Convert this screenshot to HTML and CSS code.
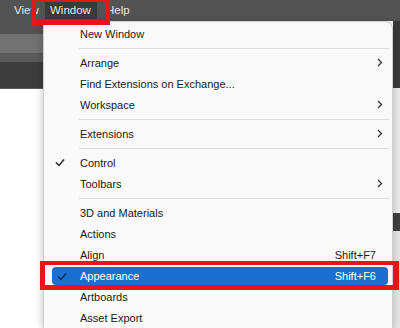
FILE: index.html
```html
<!DOCTYPE html>
<html lang="en">
<head>
  <meta charset="UTF-8">
  <title>Window menu</title>
  <link rel="stylesheet" href="styles.css">
</head>
<body>

<div class="menubar">
  <span class="mb-item view">View</span>
  <span class="mb-item active">Window</span>
  <span class="mb-item help">Help</span>
</div>

<div class="workspace">
  <div class="side-left">
    <div class="band band-a"></div>
    <div class="band band-b"></div>
    <div class="band band-c"></div>
    <div class="band band-d"></div>
  </div>

  <ul class="menu">
    <li class="item"><span class="check"></span><span class="label">New Window</span></li>
    <li class="sep"></li>
    <li class="item"><span class="check"></span><span class="label">Arrange</span><span class="arrow"><svg width="6" height="9" viewBox="0 0 6 9"><path d="M1 1l3.5 3.5L1 8" fill="none" stroke="#333" stroke-width="1.3"/></svg></span></li>
    <li class="item"><span class="check"></span><span class="label">Find Extensions on Exchange...</span></li>
    <li class="item"><span class="check"></span><span class="label">Workspace</span><span class="arrow"><svg width="6" height="9" viewBox="0 0 6 9"><path d="M1 1l3.5 3.5L1 8" fill="none" stroke="#333" stroke-width="1.3"/></svg></span></li>
    <li class="sep"></li>
    <li class="item"><span class="check"></span><span class="label">Extensions</span><span class="arrow"><svg width="6" height="9" viewBox="0 0 6 9"><path d="M1 1l3.5 3.5L1 8" fill="none" stroke="#333" stroke-width="1.3"/></svg></span></li>
    <li class="sep"></li>
    <li class="item"><span class="check"><svg width="10" height="9" viewBox="0 0 10 9"><path d="M1 4.5l3 3L9 1.5" fill="none" stroke="#222" stroke-width="1.4"/></svg></span><span class="label">Control</span></li>
    <li class="item"><span class="check"></span><span class="label">Toolbars</span><span class="arrow"><svg width="6" height="9" viewBox="0 0 6 9"><path d="M1 1l3.5 3.5L1 8" fill="none" stroke="#333" stroke-width="1.3"/></svg></span></li>
    <li class="sep"></li>
    <li class="item"><span class="check"></span><span class="label">3D and Materials</span></li>
    <li class="item"><span class="check"></span><span class="label">Actions</span></li>
    <li class="item"><span class="check"></span><span class="label">Align</span><span class="shortcut">Shift+F7</span></li>
    <li class="item selected"><span class="check"><svg width="10" height="9" viewBox="0 0 10 9"><path d="M1 4.5l3 3L9 1.5" fill="none" stroke="#0d2c52" stroke-width="1.4"/></svg></span><span class="label">Appearance</span><span class="shortcut">Shift+F6</span></li>
    <li class="item"><span class="check"></span><span class="label">Artboards</span></li>
    <li class="item"><span class="check"></span><span class="label">Asset Export</span></li>
  </ul>

  <div class="side-right">
    <div class="strip strip-top"></div>
    <div class="strip strip-mid"></div>
    <div class="strip strip-dark"></div>
    <div class="strip strip-low"></div>
  </div>
</div>

<!-- annotation boxes drawn over the screenshot -->
<div class="mark mark-window"></div>
<div class="mark mark-appearance"></div>

</body>
</html>
```

FILE: styles.css
```css
body {
  margin: 0;
  width: 400px;
  height: 328px;
  overflow: hidden;
  background: #ffffff;
  font-family: 'Liberation Sans', Arial, sans-serif;
  font-size: 11px;
  position: relative;
}

.menubar {
  height: 21px;
  background: #535353;
  display: flex;
  align-items: center;
  padding-left: 14px;
  color: #e6e6e6;
  font-size: 11.5px;
}

.mb-item {
  line-height: 15px;
}

.mb-item.view {
  width: 31px;
}

.mb-item.active {
  background: #3b3b3b;
  width: 47px;
  padding: 1px 0 1px 5px;
}

.mb-item.help {
  margin-left: 9px;
}

.workspace {
  display: flex;
  height: 307px;
}

.side-left {
  width: 43px;
  display: flex;
  flex-direction: column;
}

.band-a { height: 13px; background: #535353; }
.band-b { height: 19px; background: #727272; }
.band-c { height: 9px; background: #5a5a5a; }
.band-d { height: 26px; background: #3d3d3d; border-bottom: 1px solid #5c5c5c; }

.menu {
  list-style: none;
  margin: 0;
  padding: 1px 0 0;
  width: 348px;
  background: #f9f9f9;
  border: 1px solid #cfcfcf;
  border-bottom: none;
  border-radius: 0 8px 0 0;
  box-shadow: 0 2px 8px rgba(0, 0, 0, 0.25);
  color: #1b1b1b;
  z-index: 1;
}

.item {
  height: 21px;
  display: flex;
  align-items: center;
  margin: 0 4px 0 0;
  padding-right: 5px;
  border-radius: 4px;
}

.check {
  width: 36px;
  box-sizing: border-box;
  padding-left: 11px;
}

.check svg {
  display: block;
}

.label {
  flex: 1;
}

.shortcut {
  margin-right: 7px;
}

.arrow svg {
  display: block;
}

.sep {
  height: 8px;
  display: flex;
  align-items: center;
  padding: 0 3px 0 35px;
}

.sep::after {
  content: '';
  flex: 1;
  height: 1px;
  background: #dedede;
}

.item.selected {
  background: #1a6fd0;
  color: #ffffff;
  margin: 2px 4px 0 8px;
  height: 18px;
}

.item.selected .check {
  width: 28px;
  padding-left: 5px;
}

.item.selected + .item {
  margin-top: 1px;
}

.side-right {
  flex: 1;
  display: flex;
  flex-direction: column;
}

.strip-top { height: 67px; background: #3a3a3a; }
.strip-mid { height: 125px; background: #ececec; }
.strip-dark { height: 18px; background: #404040; }
.strip-low { flex: 1; background: #e8e8e8; }

.mark {
  position: absolute;
  z-index: 2;
  border: 5px solid #e8141b;
  box-sizing: border-box;
}

.mark-window {
  left: 31px;
  top: -3px;
  width: 79px;
  height: 28px;
}

.mark-appearance {
  left: 40px;
  top: 261px;
  width: 359px;
  height: 29px;
  border-width: 4px 6px 5px 5px;
}
```
